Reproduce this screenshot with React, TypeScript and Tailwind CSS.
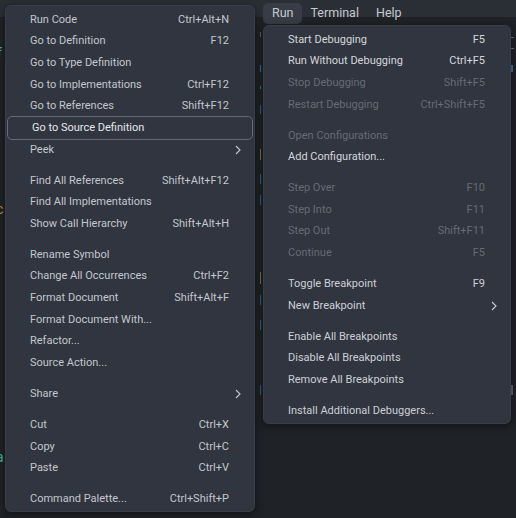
import React from "react";

type Entry =
  | { sep: true }
  | {
      label: string;
      shortcut?: string;
      sub?: boolean;
      disabled?: boolean;
      active?: boolean;
      bright?: boolean;
    };

const editorMenu: Entry[] = [
  { label: "Run Code", shortcut: "Ctrl+Alt+N" },
  { label: "Go to Definition", shortcut: "F12" },
  { label: "Go to Type Definition" },
  { label: "Go to Implementations", shortcut: "Ctrl+F12" },
  { label: "Go to References", shortcut: "Shift+F12" },
  { label: "Go to Source Definition", active: true },
  { label: "Peek", sub: true },
  { sep: true },
  { label: "Find All References", shortcut: "Shift+Alt+F12" },
  { label: "Find All Implementations" },
  { label: "Show Call Hierarchy", shortcut: "Shift+Alt+H" },
  { sep: true },
  { label: "Rename Symbol" },
  { label: "Change All Occurrences", shortcut: "Ctrl+F2" },
  { label: "Format Document", shortcut: "Shift+Alt+F" },
  { label: "Format Document With..." },
  { label: "Refactor..." },
  { label: "Source Action..." },
  { sep: true },
  { label: "Share", sub: true },
  { sep: true },
  { label: "Cut", shortcut: "Ctrl+X" },
  { label: "Copy", shortcut: "Ctrl+C" },
  { label: "Paste", shortcut: "Ctrl+V" },
  { sep: true },
  { label: "Command Palette...", shortcut: "Ctrl+Shift+P" },
];

const runMenu: Entry[] = [
  { label: "Start Debugging", shortcut: "F5", bright: true },
  { label: "Run Without Debugging", shortcut: "Ctrl+F5", bright: true },
  { label: "Stop Debugging", shortcut: "Shift+F5", disabled: true },
  { label: "Restart Debugging", shortcut: "Ctrl+Shift+F5", disabled: true },
  { sep: true },
  { label: "Open Configurations", disabled: true },
  { label: "Add Configuration...", bright: true },
  { sep: true },
  { label: "Step Over", shortcut: "F10", disabled: true },
  { label: "Step Into", shortcut: "F11", disabled: true },
  { label: "Step Out", shortcut: "Shift+F11", disabled: true },
  { label: "Continue", shortcut: "F5", disabled: true },
  { sep: true },
  { label: "Toggle Breakpoint", shortcut: "F9" },
  { label: "New Breakpoint", sub: true },
  { sep: true },
  { label: "Enable All Breakpoints" },
  { label: "Disable All Breakpoints" },
  { label: "Remove All Breakpoints" },
  { sep: true },
  { label: "Install Additional Debuggers..." },
];

function Chevron() {
  return (
    <svg width="6" height="10" viewBox="0 0 6 10" className="-mr-[12px] ml-auto">
      <path d="M1 1l4 4-4 4" fill="none" stroke="currentColor" strokeWidth="1.1" />
    </svg>
  );
}

function Menu({ items, className, textClass }: { items: Entry[]; className: string; textClass: string }) {
  return (
    <div
      className={
        "absolute flex flex-col py-[3px] rounded-[6px] bg-[#30353f] border border-[#383d47] shadow-[0_2px_8px_rgba(0,0,0,0.45)] " +
        className
      }
    >
      {items.map((it, i) => {
        if ("sep" in it) return <div key={i} className="h-[9.33px] shrink-0" />;
        const color = it.disabled
          ? "text-[#666b75]"
          : it.active
          ? "text-[#e6e8ec]"
          : it.bright
          ? "text-[#d4d7dc]"
          : textClass;
        return (
          <div
            key={i}
            className={
              "flex items-center h-[21.67px] shrink-0 pl-[24px] pr-[25px] " +
              color +
              (it.active
                ? " mx-[1px] -my-[1px] h-[23.67px] pl-[21px] pr-[23px] border border-[#646a75] rounded-[5px]"
                : "")
            }
          >
            <span className="whitespace-nowrap">{it.label}</span>
            {it.shortcut && <span className="ml-auto whitespace-nowrap">{it.shortcut}</span>}
            {it.sub && <Chevron />}
          </div>
        );
      })}
    </div>
  );
}

function Mark({ mt, h, color }: { mt: number; h: number; color: string }) {
  return <div className="w-[1px] shrink-0" style={{ marginTop: mt, height: h, backgroundColor: color }} />;
}

export default function App() {
  return (
    <div
      className="relative w-[516px] h-[518px] overflow-hidden bg-[#1f2226] text-[11px]"
      style={{ fontFamily: 'Roboto, "Noto Sans", sans-serif' }}
    >
      <div className="h-[17px] bg-[#2a2e35]">
        <div className="flex items-start pl-[263px] pt-[3px] text-[12.5px] text-[#c6c9cf]">
          <div className="h-[21px] pl-[9px] pr-[8px] flex items-center rounded-[5px] bg-[#373c46]">Run</div>
          <div className="h-[21px] px-[9px] flex items-center">Terminal</div>
          <div className="h-[21px] px-[8px] flex items-center">Help</div>
        </div>
      </div>

      {/* editor behind the menus */}
      <div className="flex h-[501px]">
        <div className="w-[5px] flex flex-col text-[14px] leading-[14px] overflow-hidden">
          <span className="mt-[29px] -ml-[3px] text-[#3fb4a6]">f</span>
          <span className="mt-[142px] -ml-[4px] text-[#d08a36]">c</span>
          <span className="mt-[234px] -ml-[4px] text-[#3fb4a6]">a</span>
        </div>
        <div className="w-[255px]" />
        <div className="w-[3px] flex flex-col">
          <Mark mt={15} h={5} color="#5d636d" />
          <Mark mt={28} h={7} color="#3a6ea5" />
          <Mark mt={14} h={3} color="#3a6ea5" />
          <Mark mt={16} h={9} color="#365f88" />
          <Mark mt={35} h={11} color="#7d7040" />
          <Mark mt={14} h={10} color="#365f88" />
          <Mark mt={11} h={10} color="#365f88" />
          <Mark mt={67} h={12} color="#7d7040" />
          <Mark mt={11} h={10} color="#365f88" />
          <Mark mt={15} h={10} color="#365f88" />
          <Mark mt={55} h={10} color="#365f88" />
        </div>
        <div className="w-[248px]" />
        <div className="flex flex-col">
          <div className="mt-[20px] w-[3px] h-[1px] bg-[#6b7079]" />
          <div className="mt-[10px] w-[3px] h-[1px] bg-[#6b7079]" />
          <div className="mt-[16px] w-[2px] h-[7px] bg-[#3a6ea5]" />
          <div className="mt-[313px] w-[2px] h-[10px] bg-[#5d636d]" />
        </div>
      </div>

      <Menu items={editorMenu} className="left-[5px] top-[5px] w-[250px] h-[507px]" textClass="text-[#c3c7ce]" />
      <Menu items={runMenu} className="left-[263px] top-[25px] w-[248px] h-[399px]" textClass="text-[#ccd0d6]" />
    </div>
  );
}
